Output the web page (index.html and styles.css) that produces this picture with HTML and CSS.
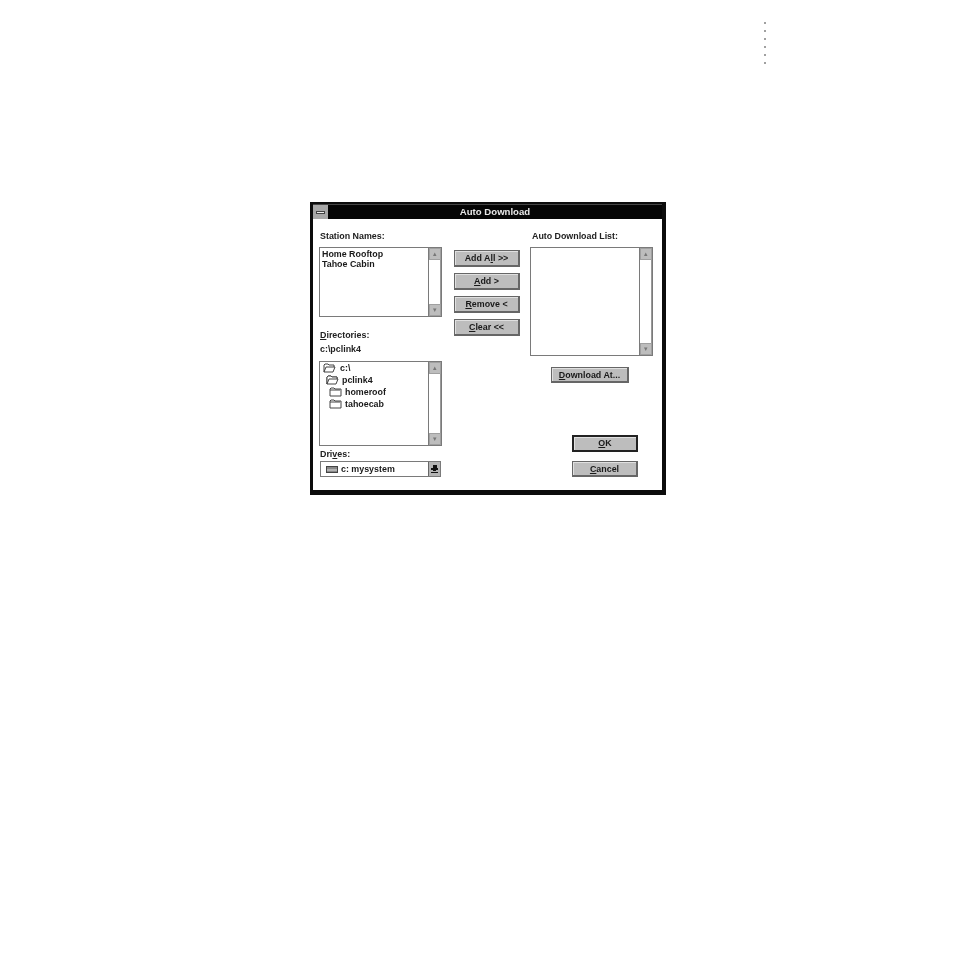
FILE: index.html
```html
<!DOCTYPE html>
<html lang="en">
<head>
<meta charset="utf-8">
<title>Auto Download</title>
<link rel="stylesheet" href="styles.css">
</head>
<body>
<div class="dots"><i></i><i></i><i></i><i></i><i></i><i></i></div>
<div class="dialog">
  <div class="titlebar">
    <div class="sysbox"><span></span></div>
    <div class="title">Auto Download</div>
  </div>
  <div class="content">
    <div class="col">
      <div class="label">Station Names:</div>
      <div class="listbox h-station">
        <div class="items">
          <div class="item">Home Rooftop</div>
          <div class="item">Tahoe Cabin</div>
        </div>
        <div class="scroll"><b>▴</b><em></em><b>▾</b></div>
      </div>
      <div class="label dirs"><u>D</u>irectories:</div>
      <div class="label path">c:\pclink4</div>
      <div class="listbox h-dirs">
        <div class="items tree">
          <div class="node l0"><svg class="folder" viewBox="0 0 13 10"><path d="M1 9V2l1-1h3l1 1h5v2M1 9l2-5h9l-2 5z"/></svg>c:\</div>
          <div class="node l1"><svg class="folder" viewBox="0 0 13 10"><path class="fill" d="M1 9V2l1-1h3l1 1h5v2H3z"/><path d="M1 9V2l1-1h3l1 1h5v2M1 9l2-5h9l-2 5z"/></svg>pclink4</div>
          <div class="node l2"><svg class="folder" viewBox="0 0 13 10"><path d="M1 9V2l1-1h3l1 1h6v7zM1 3h10"/></svg>homeroof</div>
          <div class="node l2"><svg class="folder" viewBox="0 0 13 10"><path d="M1 9V2l1-1h3l1 1h6v7zM1 3h10"/></svg>tahoecab</div>
        </div>
        <div class="scroll"><b>▴</b><em></em><b>▾</b></div>
      </div>
      <div class="label drives">Dri<u>v</u>es:</div>
      <div class="combo">
        <div class="drive"><svg class="hdd" viewBox="0 0 12 7"><rect x="0.5" y="0.5" width="11" height="6"/><path d="M1 4h10"/></svg>c: mysystem</div>
        <div class="drop"><span class="arrow"></span></div>
      </div>
    </div>
    <div class="col-mid">
      <div class="btn w-mid">Add A<u>l</u>l &gt;&gt;</div>
      <div class="btn w-mid"><u>A</u>dd &gt;</div>
      <div class="btn w-mid"><u>R</u>emove &lt;</div>
      <div class="btn w-mid"><u>C</u>lear &lt;&lt;</div>
    </div>
    <div class="col col-right">
      <div class="label">Auto Download List:</div>
      <div class="listbox h-auto">
        <div class="items"></div>
        <div class="scroll"><b>▴</b><em></em><b>▾</b></div>
      </div>
      <div class="btn at"><u>D</u>ownload At...</div>
      <div class="btn ok"><u>O</u>K</div>
      <div class="btn cancel"><u>C</u>ancel</div>
    </div>
  </div>
</div>
</body>
</html>
```
FILE: styles.css
```css
* { box-sizing: border-box; }
html, body { margin: 0; padding: 0; background: #fff; }
body { height: 954px; overflow: hidden; font-family: "Liberation Sans", Arial, sans-serif; color: #1a1a1a; }

.dots { display: flex; flex-direction: column; gap: 6px; margin: 22px 0 0 764px; width: 2px; }
.dots i { display: block; width: 2px; height: 2px; background: #a0a0a0; }

.dialog {
  width: 356px; height: 293px; margin: 138px 0 0 310px;
  background: #fff;
  border-style: solid; border-color: #0c0c0c;
  border-width: 2px 4px 5px 3px;
  filter: blur(0.7px);
  display: flex; flex-direction: column;
}
.titlebar { height: 15px; background: #050505; display: flex; flex: none; position: relative; border-top: 1px solid #444; }
.sysbox { width: 15px; background: #a8a8a8; display: flex; align-items: center; justify-content: center; }
.sysbox span { width: 9px; height: 3px; background: #eee; border: 1px solid #444; }
.title { flex: 1; text-align: center; color: #e8e8e8; font-size: 9.6px; font-weight: 700; line-height: 14px; }

.content { flex: 1; display: flex; padding-left: 6px; }
.col { width: 123px; padding-top: 12px; flex: none; }
.col-mid { width: 66px; margin: 0 10px 0 12px; padding-top: 31px; display: flex; flex-direction: column; gap: 6px; flex: none; }
.col-right .label { padding-left: 2px; letter-spacing: -0.02px; }

.label { font-size: 8.9px; font-weight: 700; line-height: 10px; height: 10px; margin-bottom: 6px; padding-left: 1px; white-space: nowrap; color: #222; }
.label.dirs { margin: 13px 0 4px; }
.label.path { margin-bottom: 7px; }
.label.drives { margin: 3px 0 2px; }

.listbox { display: flex; border: 1px solid #7a7a7a; background: #fff; }
.h-station { height: 70px; }
.h-dirs { height: 85px; }
.h-auto { height: 109px; }
.items { flex: 1; padding: 2px 2px 0; font-size: 8.9px; font-weight: 700; line-height: 9.5px; white-space: nowrap; }

.scroll { width: 13px; flex: none; border-left: 1px solid #7a7a7a; display: flex; flex-direction: column; }
.scroll b { height: 12px; flex: none; background: #bdbdbd; border: 1px solid #a0a0a0; color: #777; font-size: 7px; line-height: 10px; text-align: center; font-weight: 400; }
.scroll em { flex: 1; background: #fff; border-right: 1px solid #999; }

.tree { padding: 0; line-height: 12px; }
.node { display: flex; align-items: center; height: 12px; gap: 4px; }
.l0 { padding-left: 3px; }
.l1 { padding-left: 6px; gap: 3px; }
.l2 { padding-left: 9px; gap: 3px; }
.folder { width: 13px; height: 10px; flex: none; }
.folder path { fill: #fff; stroke: #444; stroke-width: 1; }
.folder path.fill { fill: #666; }

.combo { height: 16px; margin-left: 1px; width: 121px; border: 1px solid #7a7a7a; display: flex; align-items: stretch; }
.drive { flex: 1; display: flex; align-items: center; gap: 3px; padding-left: 5px; font-size: 8.9px; font-weight: 700; white-space: nowrap; }
.hdd { width: 12px; height: 7px; flex: none; }
.hdd rect { fill: #888; stroke: #444; }
.hdd path { stroke: #ddd; fill: none; }
.drop { width: 12px; flex: none; background: #b5b5b5; border-left: 1px solid #666; display: flex; align-items: center; justify-content: center; }
.arrow { width: 7px; height: 8px; background: linear-gradient(#111, #111) 1.5px 0 / 4px 3px no-repeat, linear-gradient(#111, #111) 0 3px / 7px 2px no-repeat, linear-gradient(#111, #111) 2px 5px / 3px 1px no-repeat, linear-gradient(#111, #111) 0 7px / 7px 1px no-repeat; }

.btn {
  height: 17px; background: #bdbdbd;
  border: 1px solid #666;
  border-right-width: 2px; border-bottom-width: 2px;
  box-shadow: inset 1px 1px 0 #e0e0e0;
  font-size: 8.9px; font-weight: 700; line-height: 14px; text-align: center; white-space: nowrap;
}
.w-mid { width: 66px; }
.btn.at { width: 78px; height: 16px; margin: 11px 0 0 21px; }
.btn.ok { width: 66px; height: 17px; margin: 52px 0 0 42px; border-width: 2px; border-color: #222; line-height: 13px; }
.btn.cancel { width: 66px; height: 16px; margin: 9px 0 0 42px; }
```
